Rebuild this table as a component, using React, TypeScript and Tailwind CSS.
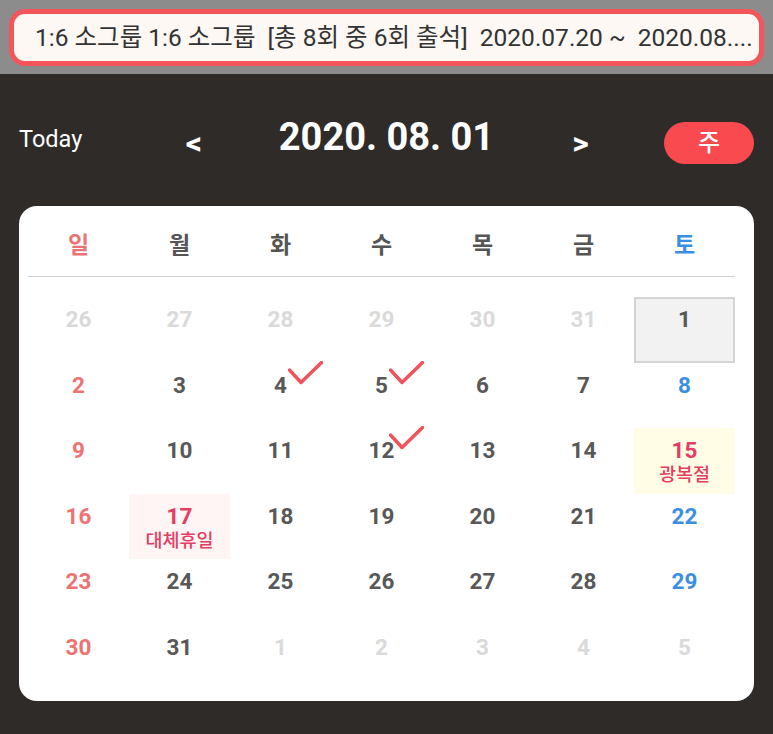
type Day = {
  d: number;
  kind: "sun" | "sat" | "norm" | "fade" | "holi";
  label?: string;
  bg?: string;
  check?: boolean;
  selected?: boolean;
};

const weeks: Day[][] = [
  [
    { d: 26, kind: "fade" },
    { d: 27, kind: "fade" },
    { d: 28, kind: "fade" },
    { d: 29, kind: "fade" },
    { d: 30, kind: "fade" },
    { d: 31, kind: "fade" },
    { d: 1, kind: "norm", selected: true },
  ],
  [
    { d: 2, kind: "sun" },
    { d: 3, kind: "norm" },
    { d: 4, kind: "norm", check: true },
    { d: 5, kind: "norm", check: true },
    { d: 6, kind: "norm" },
    { d: 7, kind: "norm" },
    { d: 8, kind: "sat" },
  ],
  [
    { d: 9, kind: "sun" },
    { d: 10, kind: "norm" },
    { d: 11, kind: "norm" },
    { d: 12, kind: "norm", check: true },
    { d: 13, kind: "norm" },
    { d: 14, kind: "norm" },
    { d: 15, kind: "holi", label: "광복절", bg: "yellow" },
  ],
  [
    { d: 16, kind: "sun" },
    { d: 17, kind: "holi", label: "대체휴일", bg: "pink" },
    { d: 18, kind: "norm" },
    { d: 19, kind: "norm" },
    { d: 20, kind: "norm" },
    { d: 21, kind: "norm" },
    { d: 22, kind: "sat" },
  ],
  [
    { d: 23, kind: "sun" },
    { d: 24, kind: "norm" },
    { d: 25, kind: "norm" },
    { d: 26, kind: "norm" },
    { d: 27, kind: "norm" },
    { d: 28, kind: "norm" },
    { d: 29, kind: "sat" },
  ],
  [
    { d: 30, kind: "sun" },
    { d: 31, kind: "norm" },
    { d: 1, kind: "fade" },
    { d: 2, kind: "fade" },
    { d: 3, kind: "fade" },
    { d: 4, kind: "fade" },
    { d: 5, kind: "fade" },
  ],
];

const dayNames = ["일", "월", "화", "수", "목", "금", "토"];

const numColor = {
  sun: "text-[#ef7272]",
  sat: "text-[#3b8fe3]",
  norm: "text-[#585858]",
  fade: "text-[#dadada]",
  holi: "text-[#e43d63]",
};

function Check() {
  return (
    <svg
      className="absolute left-[calc(50%+7px)] top-[-2px]"
      width="35"
      height="24"
      viewBox="0 0 35 24"
      fill="none"
    >
      <path
        d="M1.5 9 L13 21.5 L33.5 1.5"
        stroke="#f0535b"
        strokeWidth="3.5"
        strokeLinecap="round"
        strokeLinejoin="round"
      />
    </svg>
  );
}

function Cell({ day }: { day: Day }) {
  let box = "";
  if (day.selected) box = "bg-[#f2f2f2] border-2 border-[#d4d4d4]";
  else if (day.bg === "yellow") box = "bg-[#fffde6]";
  else if (day.bg === "pink") box = "bg-[#fff5f5]";

  return (
    <div className={`relative h-[65.6px] ${box}`}>
      <div
        className={`flex flex-col items-center ${day.selected ? "pt-[5px]" : "pt-[7px]"}`}
      >
        <span className={`text-[22.5px] font-bold leading-[30px] ${numColor[day.kind]}`}>
          {day.d}
        </span>
        {day.label && (
          <span className="text-[18.5px] leading-[20px] font-medium text-[#e43d63]">
            {day.label}
          </span>
        )}
      </div>
      {day.check && <Check />}
    </div>
  );
}

export default function App() {
  return (
    <div className="h-[734px] w-[773px] bg-[#2f2b28] font-[Roboto,'Noto_Sans_CJK_KR',sans-serif]">
      {/* 상단 그룹 정보 */}
      <div className="h-[74px] bg-[#8c8c8c] px-[9px] pt-[9px]">
        <div className="flex h-[57px] items-center overflow-hidden rounded-[16px] border-[5px] border-[#f4555b] bg-[#fdf8f4] pl-[21px]">
          <span className="whitespace-pre text-[24.5px] leading-[30px] text-[#333333]">
            1:6 소그룹 1:6 소그룹  [총 8회 중 6회 출석]  2020.07.20 ~  2020.08....
          </span>
        </div>
      </div>

      {/* 날짜 네비게이션 */}
      <div className="grid h-[42px] grid-cols-[1fr_auto_1fr] items-center px-[19px] mt-[48px]">
        <span className="mb-[8px] text-[23.5px] leading-[28px] text-white">Today</span>
        <div className="flex items-center">
          <span className="w-[15px] text-[32px] font-bold leading-[42px] text-white">&lt;</span>
          <span className="mx-[78px] mb-[12px] text-[38px] font-bold leading-[30px] text-white">
            2020. 08. 01
          </span>
          <span className="w-[15px] text-[32px] font-bold leading-[42px] text-white">&gt;</span>
        </div>
        <div className="flex justify-end">
          <button className="flex h-[42px] w-[90px] items-center justify-center rounded-full bg-[#f94a50] text-[24px] font-medium text-white">
            주
          </button>
        </div>
      </div>

      {/* 달력 */}
      <div className="mx-[19px] mt-[42px] rounded-[18px] bg-white pb-[10px] pl-[9px] pr-[19px] pt-[20px]">
        <div className="grid h-[40px] grid-cols-7 items-center">
          {dayNames.map((n, i) => (
            <span
              key={n}
              className={`text-center text-[23px] font-semibold ${
                i === 0 ? "text-[#e87575]" : i === 6 ? "text-[#3b8fe3]" : "text-[#555555]"
              }`}
            >
              {n}
            </span>
          ))}
        </div>
        <div className="mb-[20px] mt-[10px] h-px bg-[#cfcfcf]" />
        <div className="grid grid-cols-7">
          {weeks.flat().map((day, i) => (
            <Cell key={i} day={day} />
          ))}
        </div>
      </div>
    </div>
  );
}
